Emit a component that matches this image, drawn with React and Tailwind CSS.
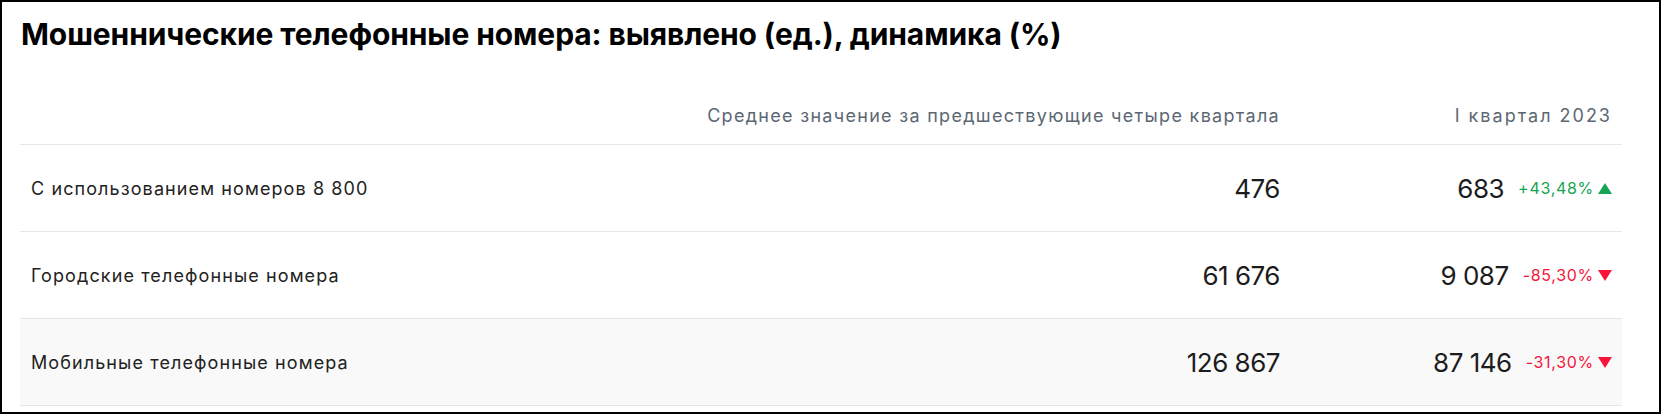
const rows = [
  { label: "С использованием номеров 8 800", avg: "476", cur: "683", delta: "+43,48%", up: true },
  { label: "Городские телефонные номера", avg: "61 676", cur: "9 087", delta: "-85,30%", up: false },
  { label: "Мобильные телефонные номера", avg: "126 867", cur: "87 146", delta: "-31,30%", up: false, shaded: true },
];

function Arrow({ up }) {
  return up ? (
    <svg width="14" height="11" viewBox="0 0 14 11" className="ml-[4px]">
      <path d="M7 0 L14 11 L0 11 Z" fill="#17a454" />
    </svg>
  ) : (
    <svg width="14" height="11" viewBox="0 0 14 11" className="ml-[4px]">
      <path d="M0 0 L14 0 L7 11 Z" fill="#f5163a" />
    </svg>
  );
}

export default function App() {
  return (
    <div className="w-[1661px] h-[414px] bg-white border-2 border-black font-['Inter',sans-serif] text-[#1a1a1a]">
      {/* title */}
      <h1 className="pl-[19px] pt-[14px] h-[50px] text-[30px] leading-[36px] font-bold text-black tracking-[-0.1px]">
        Мошеннические телефонные номера: выявлено (ед.), динамика (%)
      </h1>

      <div className="ml-[18px] w-[1602px]">
        {/* header */}
        <div className="grid grid-cols-[1fr_600px_332px] pr-[10px] h-[93px] items-end pb-[16px] border-b border-[#e6e6e6] text-[18px] leading-[24px] tracking-[1.3px] text-[#5c6773]">
          <div></div>
          <div className="text-right">Среднее значение за предшествующие четыре квартала</div>
          <div className="text-right tracking-[2px]">I квартал 2023</div>
        </div>

        {/* rows */}
        {rows.map((r) => (
          <div
            key={r.label}
            className={`grid grid-cols-[1fr_600px_332px] pr-[10px] h-[87px] items-center border-b border-[#e6e6e6] ${
              r.shaded ? "bg-[#f9f9f9]" : ""
            }`}
          >
            <div className="pl-[11px] text-[18px] tracking-[1.1px] text-[#222]">{r.label}</div>
            <div className="text-right text-[26px] tracking-[-0.5px] text-[#1c1c1c]">{r.avg}</div>
            <div className="flex items-center justify-end">
              <span className="text-[26px] tracking-[-0.5px] text-[#1c1c1c]">{r.cur}</span>
              <span
                className={`ml-[14px] text-[16px] tracking-[0.7px] ${r.up ? "text-[#17a454]" : "text-[#f5163a]"}`}
              >
                {r.delta}
              </span>
              <Arrow up={r.up} />
            </div>
          </div>
        ))}
      </div>
    </div>
  );
}
